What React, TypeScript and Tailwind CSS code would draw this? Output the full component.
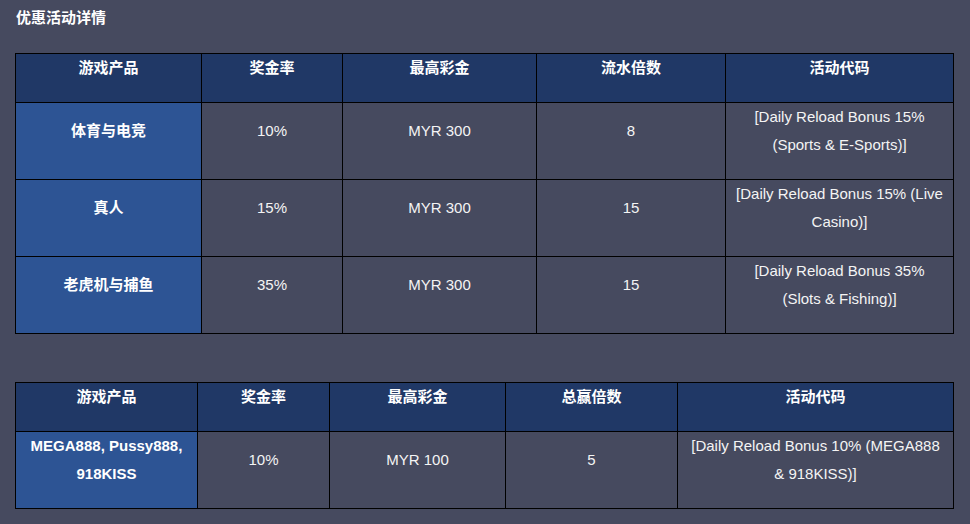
const font = { fontFamily: '"Liberation Sans", Arial, "Noto Sans CJK SC", sans-serif' };

type Row = { name: string; rate: string; max: string; mult: string; code: string };

const rowsA: Row[] = [
  { name: "体育与电竞", rate: "10%", max: "MYR 300", mult: "8", code: "[Daily Reload Bonus 15% (Sports & E-Sports)]" },
  { name: "真人", rate: "15%", max: "MYR 300", mult: "15", code: "[Daily Reload Bonus 15% (Live Casino)]" },
  { name: "老虎机与捕鱼", rate: "35%", max: "MYR 300", mult: "15", code: "[Daily Reload Bonus 35% (Slots & Fishing)]" },
];

const rowsB: Row[] = [
  { name: "MEGA888, Pussy888, 918KISS", rate: "10%", max: "MYR 100", mult: "5", code: "[Daily Reload Bonus 10% (MEGA888 & 918KISS)]" },
];

function PromoTable({ heads, widths, rows }: { heads: string[]; widths: string[]; rows: Row[] }) {
  return (
    <table className="w-[938px] table-fixed border-collapse text-center text-[15px] text-white">
      <colgroup>
        {widths.map((w, i) => (
          <col key={i} className={w} />
        ))}
      </colgroup>
      <thead>
        <tr className="bg-[#203866]">
          {heads.map((h) => (
            <th key={h} className="border border-black px-2 align-middle font-bold">
              <p className="mb-5 leading-[28px]">{h}</p>
            </th>
          ))}
        </tr>
      </thead>
      <tbody>
        {rows.map((r) => (
          <tr key={r.name} className="h-[77px]">
            <td className="border border-black bg-[#2d5494] px-3 align-middle font-bold">
              <p className="mb-5 leading-[28px]">{r.name}</p>
            </td>
            {[r.rate, r.max, r.mult, r.code].map((v, i) => (
              <td key={i} className="border border-black px-2 align-middle text-[#f4f4f4]">
                <p className="mb-5 leading-[28px]">{v}</p>
              </td>
            ))}
          </tr>
        ))}
      </tbody>
    </table>
  );
}

export default function App() {
  return (
    <div className="min-h-[524px] w-[970px] bg-[#464a5f] px-[15px] pt-[8px] pb-4" style={font}>
      <h1 className="pl-px text-[15px] font-bold leading-[20px] text-white">优惠活动详情</h1>
      <div className="mt-[25px]">
        <PromoTable
          heads={["游戏产品", "奖金率", "最高彩金", "流水倍数", "活动代码"]}
          widths={["w-[186px]", "w-[141px]", "w-[194px]", "w-[189px]", "w-[228px]"]}
          rows={rowsA}
        />
      </div>
      <div className="mt-[48px]">
        <PromoTable
          heads={["游戏产品", "奖金率", "最高彩金", "总赢倍数", "活动代码"]}
          widths={["w-[182px]", "w-[132px]", "w-[176px]", "w-[172px]", "w-[276px]"]}
          rows={rowsB}
        />
      </div>
    </div>
  );
}
